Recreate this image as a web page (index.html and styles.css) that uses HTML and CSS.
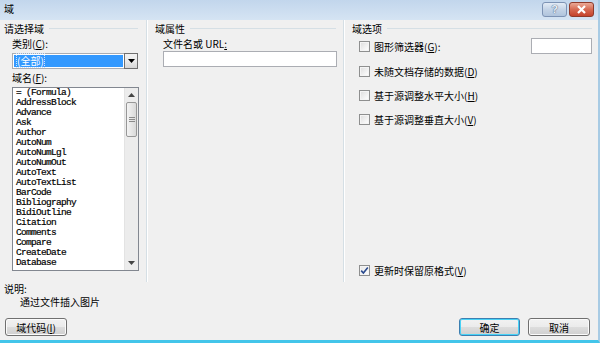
FILE: index.html
```html
<!DOCTYPE html>
<html lang="zh-CN">
<head>
    <meta charset="UTF-8">
    <title>域</title>
    <link rel="stylesheet" href="styles.css">
</head>
<body>
<div class="window">
    <div class="titlebar">
        <span class="title">域</span>
        <div class="caption-btns">
            <span class="cbtn help">?</span>
            <span class="cbtn close">
                <svg width="13" height="9" viewBox="0 0 13 9"><path d="M3 1 L10 8 M10 1 L3 8" stroke="#fff" stroke-width="2.2" fill="none"/></svg>
            </span>
        </div>
    </div>

    <div class="content">
        <div class="panes">
            <!-- 请选择域 -->
            <div class="pane pane-left">
                <div class="group-title"><span>请选择域</span></div>
                <div class="label lbl-cat">类别(<u>C</u>):</div>
                <div class="combo">
                    <div class="combo-value"><span>(全部)</span></div>
                    <div class="combo-btn">
                        <svg width="7" height="4" viewBox="0 0 7 4"><path d="M0 0 H7 L3.5 4 Z" fill="#000"/></svg>
                    </div>
                </div>
                <div class="label">域名(<u>F</u>):</div>
                <div class="listbox">
                    <ul class="list-items">
                        <li>= (Formula)</li>
                        <li>AddressBlock</li>
                        <li>Advance</li>
                        <li>Ask</li>
                        <li>Author</li>
                        <li>AutoNum</li>
                        <li>AutoNumLgl</li>
                        <li>AutoNumOut</li>
                        <li>AutoText</li>
                        <li>AutoTextList</li>
                        <li>BarCode</li>
                        <li>Bibliography</li>
                        <li>BidiOutline</li>
                        <li>Citation</li>
                        <li>Comments</li>
                        <li>Compare</li>
                        <li>CreateDate</li>
                        <li>Database</li>
                    </ul>
                    <div class="scrollbar">
                        <div class="sb-arrow">
                            <svg width="7" height="4" viewBox="0 0 7 4"><path d="M0 4 H7 L3.5 0 Z" fill="#444"/></svg>
                        </div>
                        <div class="sb-track">
                            <div class="sb-thumb"><i></i><i></i><i></i></div>
                        </div>
                        <div class="sb-arrow">
                            <svg width="7" height="4" viewBox="0 0 7 4"><path d="M0 0 H7 L3.5 4 Z" fill="#444"/></svg>
                        </div>
                    </div>
                </div>
            </div>

            <!-- 域属性 -->
            <div class="pane pane-mid">
                <div class="group-title"><span>域属性</span></div>
                <div class="label">文件名或 URL<u>:</u></div>
                <div class="textbox url-box"></div>
            </div>

            <!-- 域选项 -->
            <div class="pane pane-right">
                <div class="group-title"><span>域选项</span></div>
                <div class="check-row first">
                    <span class="checkbox"></span>
                    <span>图形筛选器(<u>G</u>):</span>
                    <div class="textbox filter-box"></div>
                </div>
                <div class="check-row">
                    <span class="checkbox"></span>
                    <span>未随文档存储的数据(<u>D</u>)</span>
                </div>
                <div class="check-row">
                    <span class="checkbox"></span>
                    <span>基于源调整水平大小(<u>H</u>)</span>
                </div>
                <div class="check-row">
                    <span class="checkbox"></span>
                    <span>基于源调整垂直大小(<u>V</u>)</span>
                </div>
                <div class="check-row keep-format">
                    <span class="checkbox checked">
                        <svg width="9" height="9" viewBox="0 0 9 9"><path d="M1.2 4.6 L3.4 7 L7.8 1.6" stroke="#2a4a8e" stroke-width="1.6" fill="none"/></svg>
                    </span>
                    <span>更新时保留原格式(<u>V</u>)</span>
                </div>
            </div>
        </div>

        <div class="desc">
            <div>说明:</div>
            <div class="desc-text">通过文件插入图片</div>
        </div>

        <div class="footer">
            <span class="btn">域代码(<u>I</u>)</span>
            <div class="footer-right">
                <span class="btn btn-default">确定</span>
                <span class="btn">取消</span>
            </div>
        </div>
    </div>
</div>
</body>
</html>
```

FILE: styles.css
```css
* {
    box-sizing: border-box;
}
body {
    margin: 0;
    font: 10px/13px "Noto Sans CJK SC", "Liberation Sans", sans-serif;
    color: #000;
    background: #f0f0f0;
}
ul,
li {
    margin: 0;
    padding: 0;
    list-style: none;
}
u {
    text-decoration: underline;
    text-underline-offset: 1px;
}

.window {
    width: 600px;
    height: 343px;
    display: flex;
    flex-direction: column;
    border-right: 2px solid #a8cbe4;
    border-bottom: 3px solid #43c5ea;
    overflow: hidden;
}

/* title bar */
.titlebar {
    height: 20px;
    flex: none;
    display: flex;
    justify-content: space-between;
    align-items: flex-start;
    padding: 2px 4px 0 4px;
    background: linear-gradient(#c2d6ec, #d5e4f3);
}
.title {
    line-height: 13px;
}
.caption-btns {
    display: flex;
    gap: 2px;
}
.cbtn {
    width: 25px;
    height: 15px;
    display: flex;
    align-items: center;
    justify-content: center;
    border-radius: 3px;
}
.help {
    border: 1px solid #7d93b4;
    background: linear-gradient(#e3ebf5, #c3d3e6 50%, #b0c4dc);
    color: #e9eef5;
    font: bold 11px/13px "Liberation Sans", sans-serif;
    text-shadow: 0 0 1px #4d6688, 0 0 1px #4d6688;
}
.close {
    border: 1px solid #8e3b2b;
    background: linear-gradient(#eaa996, #d66a52 50%, #c5432c);
}

/* body */
.content {
    flex: 1;
    display: flex;
    flex-direction: column;
    background: #f0f0f0;
}
.panes {
    display: flex;
    height: 262px;
    flex: none;
}
.pane {
    display: flex;
    flex-direction: column;
    padding-top: 2px;
}
.pane-left {
    width: 147px;
    padding-left: 4px;
    padding-right: 8px;
    border-right: 1px solid #d5dfe5;
}
.pane-mid {
    width: 197px;
    padding-left: 7px;
    padding-right: 7px;
    border-left: 1px solid #fff;
    border-right: 1px solid #d5dfe5;
}
.pane-right {
    flex: 1;
    padding-left: 7px;
    padding-right: 6px;
    padding-bottom: 5px;
    border-left: 1px solid #fff;
}

.group-title {
    display: flex;
    align-items: center;
    height: 13px;
}
.group-title::after {
    content: "";
    flex: 1;
    height: 1px;
    margin-left: 5px;
    background: #d5dfe5;
}

.label {
    margin-left: 8px;
    margin-top: 2px;
}

/* combo box */
.combo {
    margin: 3px 0 0 8px;
    width: 126px;
    height: 16px;
    display: flex;
    border: 1px solid #abadb3;
    background: #fff;
}
.combo-value {
    flex: 1;
    margin: 1px;
    background: #3399ff;
    color: #fff;
    line-height: 12px;
    padding-left: 2px;
}
.combo-value span {
    outline: 1px dotted #cfe4ff;
    outline-offset: -1px;
    padding: 0 1px;
}
.combo-btn {
    width: 14px;
    display: flex;
    align-items: center;
    justify-content: center;
    border: 1px solid #707070;
    margin: -1px -1px -1px 0;
    background: linear-gradient(#f2f2f2, #ebebeb 50%, #d6d6d6);
}

/* list box */
.listbox {
    margin: 3px 0 0 8px;
    width: 127px;
    height: 184px;
    display: flex;
    border: 1px solid #828790;
    background: #fff;
    overflow: hidden;
}
.list-items {
    flex: 1;
    padding-left: 3px;
    font: 9.5px/10px "Liberation Mono", "DejaVu Sans Mono", monospace;
    letter-spacing: -0.7px;
    color: #000;
    -webkit-text-stroke: 0.2px #000;
}
.scrollbar {
    width: 14px;
    display: flex;
    flex-direction: column;
    background: #ececec;
    border-left: 1px solid #e3e3e3;
}
.sb-arrow {
    height: 14px;
    display: flex;
    align-items: center;
    justify-content: center;
}
.sb-track {
    flex: 1;
}
.sb-thumb {
    margin: 0 1px;
    height: 35px;
    border: 1px solid #979797;
    border-radius: 2px;
    background: linear-gradient(90deg, #f4f4f4, #e6e6e6 50%, #d9d9d9);
    display: flex;
    flex-direction: column;
    align-items: center;
    justify-content: center;
    gap: 1px;
}
.sb-thumb i {
    width: 6px;
    height: 1px;
    background: #8a8a8a;
}

/* text boxes */
.textbox {
    height: 16px;
    border: 1px solid #abadb3;
    background: #fff;
}
.url-box {
    margin: 1px 0 0 8px;
    width: 174px;
}
.filter-box {
    margin-left: auto;
    width: 61px;
}

/* check boxes */
.check-row {
    display: flex;
    align-items: center;
    height: 14px;
    margin-top: 10px;
    margin-left: 7px;
    gap: 4px;
}
.check-row.first {
    height: 16px;
    margin-top: 3px;
}
.check-row.keep-format {
    margin-top: auto;
}
.checkbox {
    width: 11px;
    height: 11px;
    flex: none;
    border: 1px solid #8e8f8f;
    background: linear-gradient(135deg, #dcdcdc, #f6f6f6 70%, #fff);
    box-shadow: inset 0 0 0 1px #f4f4f4;
    display: flex;
    align-items: center;
    justify-content: center;
}
.checkbox.checked {
    background: linear-gradient(135deg, #e6e6e6, #fff);
}

/* description */
.desc {
    padding-left: 4px;
}
.desc-text {
    padding-left: 16px;
}

/* buttons */
.footer {
    display: flex;
    justify-content: space-between;
    margin-top: 10px;
    padding: 0 8px 0 5px;
}
.footer-right {
    display: flex;
    gap: 8px;
}
.btn {
    width: 62px;
    height: 18px;
    display: flex;
    align-items: center;
    justify-content: center;
    border: 1px solid #707070;
    border-radius: 3px;
    background: linear-gradient(#f2f2f2, #ebebeb 50%, #dddddd 51%, #cfcfcf);
    box-shadow: inset 0 0 0 1px #fbfbfb;
}
.btn-default {
    width: 61px;
    border-color: #3c7fb1;
    box-shadow: inset 0 0 0 1px #48d2f6;
}
```
